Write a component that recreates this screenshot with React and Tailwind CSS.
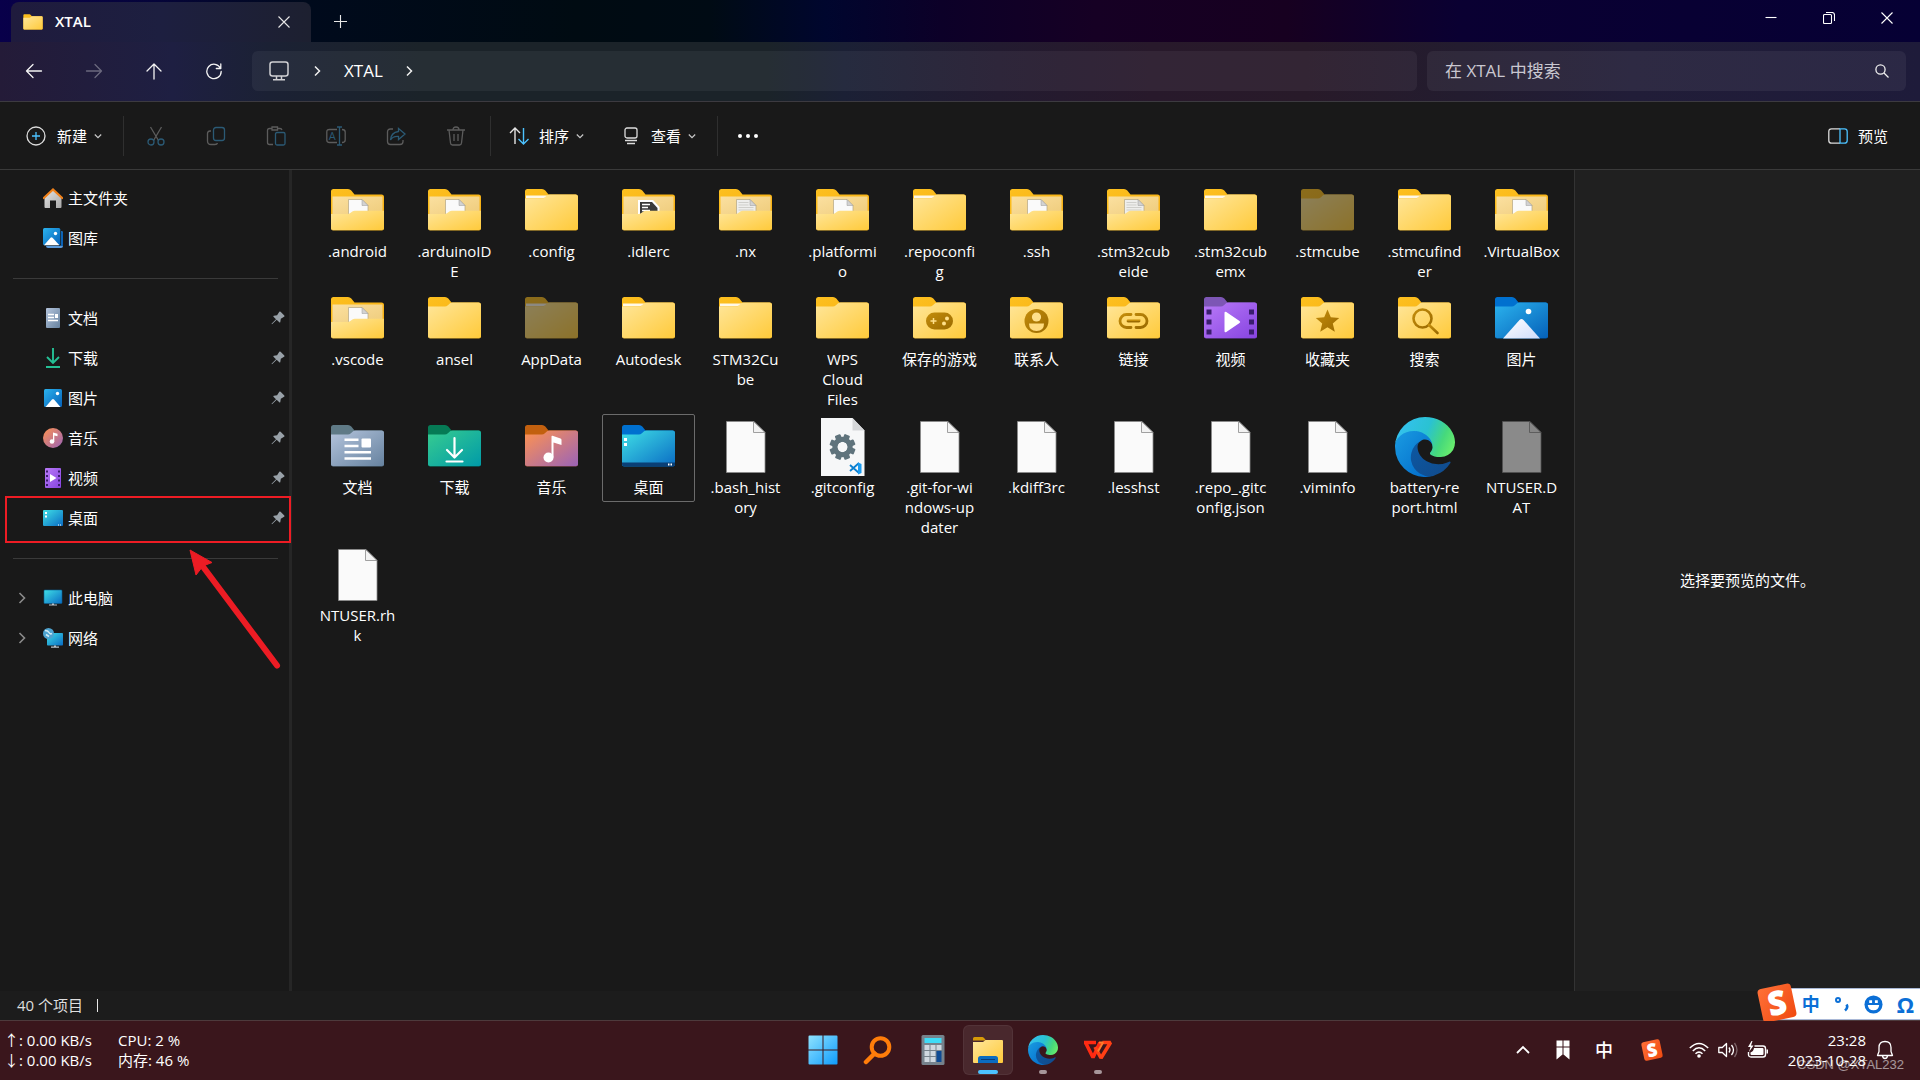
import React, { useState } from 'react';
import { clsx } from 'clsx';

const GRADIENTS = [
  ['gYellow', '#ffe69a', '#ffca3a'],
  ['gTan', '#fbe0a0', '#eecb7a'],
  ['gTab', '#fdc01f', '#f5ac12'],
  ['gGold', '#c48d0b', '#9a6a00'],
  ['gDocs', '#b4c4dc', '#66829f'],
  ['gDown', '#37cc90', '#009aa8'],
  ['gMusic', '#ff9350', '#9a63b8'],
  ['gDesk', '#3fdfe6', '#0a6cc4'],
  ['gVideo', '#b97af8', '#8643e0'],
  ['gPics', '#2bb3ee', '#0560b8'],
  ['gWin', '#8fe3ff', '#0f9bfb'],
  ['gHill', '#ffffff', '#cfdcfb'],
  ['gHome', '#e4e4e4', '#a8a8a8'],
  ['gEdgeDark', '#0c59a4', '#114a8b'],
  ['gEdgeBlue', '#1b9de2', '#0067c9'],
  ['gSogou', '#ff7038', '#f04a10'],
];

const Gradients = () => (
  <svg className="absolute h-0 w-0" aria-hidden="true">
    <defs>
      {GRADIENTS.map(([id, from, to]) => (
        <linearGradient key={id} id={id} x1="0" y1="0" x2="1" y2="1">
          <stop offset="0" stopColor={from} />
          <stop offset="1" stopColor={to} />
        </linearGradient>
      ))}
      <linearGradient id="gEdgeGreen" x1="0" y1="0.3" x2="1" y2="0.6">
        <stop offset="0" stopColor="#35c1f1" />
        <stop offset="0.5" stopColor="#2ac2d2" />
        <stop offset="0.8" stopColor="#46d97c" />
        <stop offset="1" stopColor="#66eb6e" />
      </linearGradient>
    </defs>
  </svg>
);

/* ---------- file icons (60 x 60) ---------- */

const FOLDER_BACK = 'M3.5 9.5Q3.5 7 6 7H20.5Q22.5 7 23.8 8.5L27 12.5H54Q56.5 12.5 56.5 15V46Q56.5 48.5 54 48.5H6Q3.5 48.5 3.5 46Z';
const FOLDER_FRONT = 'M3.5 16.5H20.5Q22 16.5 23.4 15.2L25.6 13.2Q26.6 12.5 28 12.5H54Q56.5 12.5 56.5 15V46Q56.5 48.5 54 48.5H6Q3.5 48.5 3.5 46Z';

const FOLDER_STYLES = {
  docs: ['#5f7a86', 'url(#gDocs)'],
  down: ['#067a55', 'url(#gDown)'],
  music: ['#c2600f', 'url(#gMusic)'],
  desk: ['#0070cf', 'url(#gDesk)'],
  video: ['#7d56b5', 'url(#gVideo)'],
  pics: ['#0070cf', 'url(#gPics)'],
};

const FOLDER_MARKS = {
  docs: (
    <g fill="#fff">
      <path d="M17 20.5h14v2.5H17zM17 26.8h14v2.5H17zM17 33h26.500v2.500H17zM17 39.200h26.500v2.500H17z" />
      <rect x="34" y="20.500" width="9.500" height="9" rx="1" />
    </g>
  ),
  down: (
    <g fill="none" stroke="#fff" strokeWidth="2.2" strokeLinecap="round" strokeLinejoin="round">
      <path d="M30 20v19M22.500 32l7.500 7.500 7.500-7.500M22 43.500h16" />
    </g>
  ),
  music: (
    <g fill="#fff">
      <ellipse cx="27" cy="39.500" rx="5" ry="5" />
      <path d="M30 18.500q0-1 1-.7l8 2.700q1 .4 1 1.400v5l-8-2.500v15h-2z" />
    </g>
  ),
  desk: (
    <g>
      <path d="M3.500 44.500h53v1.500q0 2.500-2.500 2.500H6q-2.500 0-2.500-2.500z" fill="#0a3f75" />
      <path d="M5.500 20h3v3h-3zM5.500 25h3v3h-3z" fill="#fff" />
      <path d="M49.500 45.500h1.500v2h-1.500zM52 45.500h1.500v2H52z" fill="#fff" />
    </g>
  ),
  video: (
    <g>
      <path
        fill="#3a1d6e"
        d="M6 19.500h5v5H6zM6 29.500h5v5H6zM6 39.500h5v5H6zM48.500 19.500h5v5h-5zM48.500 29.500h5v5h-5zM48.500 39.500h5v5h-5z"
      />
      <path d="M24 23q0-2 1.800-1L39 31q1.500 1 0 2L25.800 42q-1.800 1-1.800-1z" fill="#fff" />
    </g>
  ),
  pics: (
    <g>
      <path d="M11.500 48.500L28 30q2-2 4 0l16.500 18.500z" fill="url(#gHill)" />
      <circle cx="37" cy="21.500" r="2.800" fill="#fff" />
    </g>
  ),
  game: (
    <g>
      <rect x="16.500" y="22.500" width="27" height="17" rx="8.500" fill="url(#gGold)" />
      <path d="M24 28v6M21 31h6" stroke="#ffe08a" strokeWidth="1.500" />
      <circle cx="37.500" cy="28.500" r="2" fill="#ffe08a" />
      <circle cx="34.500" cy="33.500" r="2" fill="#ffe08a" />
    </g>
  ),
  contact: (
    <g>
      <circle cx="30" cy="31" r="12" fill="url(#gGold)" />
      <circle cx="30" cy="27" r="4.600" fill="#ffe08a" />
      <path d="M22.500 33.500h15q0 7.500-7.500 7.500t-7.500-7.500z" fill="#ffdc80" />
    </g>
  ),
  link: (
    <g fill="none" stroke="url(#gGold)" strokeWidth="2.800" strokeLinecap="round">
      <path d="M27.500 24.500h-4.500a6.500 6.500 0 0 0 0 13h4.500M32.500 24.500h4.500a6.500 6.500 0 0 1 0 13h-4.500" />
      <path d="M24.500 31h11v.02" />
    </g>
  ),
  star: (
    <path
      fill="url(#gGold)"
      d="M30 19.500l3.300 7.800 8.400.7-6.400 5.500 2 8.200-7.300-4.400-7.300 4.400 2-8.200-6.400-5.500 8.400-.7z"
    />
  ),
  search: (
    <g fill="none" stroke="url(#gGold)" strokeWidth="2.600" strokeLinecap="round">
      <circle cx="28" cy="28.500" r="9" />
      <path d="M34.500 35l8.500 8" />
    </g>
  ),
};

const FolderIcon = ({ type = 'folder', dim }) => {
  const [back, front] = FOLDER_STYLES[type] || ['url(#gTab)', 'url(#gYellow)'];
  const open = type === 'open' || type === 'openText' || type === 'openCode';

  return (
    <svg viewBox="0.5 -1 60 60" className={clsx('h-[60px] w-[60px]', dim && 'opacity-50')} aria-hidden="true">
      <path d={FOLDER_BACK} fill={back} />
      {open ? (
        <g>
          <path d="M5 14.500h50v20H5z" fill="url(#gTan)" />
          {type === 'openCode' ? (
            <g>
              <path d="M19.500 18h15l6.500 7v9h-21.500z" fill="#fff" />
              <path d="M21.500 20h12l5.500 6v8h-17.500z" fill="#3a3a3a" />
              <path d="M23.500 22.500h8M23.500 25.500h6M23.500 28.500h8" stroke="#fff" strokeWidth="1.600" />
            </g>
          ) : (
            <g>
              <path d="M21 17.500h13.500l6 6v12h-19.500z" fill={type === 'openText' ? '#eeeeec' : '#fafafa'} stroke="#b3a581" strokeWidth=".7" />
              <path d="M34.500 17.500v6h6z" fill="#d2d2d2" stroke="#9a9a9a" strokeWidth=".5" />
              {type === 'openText' && <path d="M23 20.500h10M23 23h10M23 25.500h15M23 28h15" stroke="#cfcfcb" strokeWidth="1" />}
            </g>
          )}
          <path
            d="M3.500 32H20q1.500 0 2.800-1l2-1.400q1-.8 2.500-.8H56.500V46q0 2.500-2.500 2.500H6q-2.500 0-2.500-2.500z"
            fill="url(#gYellow)"
          />
        </g>
      ) : (
        <g>
          <path d={FOLDER_FRONT} fill={front} />
          {type === 'paper' && <path d="M4.500 13.500h21l-2.200 2q-1 .8-2.800.8h-16z" fill="#fff" opacity=".9" />}
        </g>
      )}
      <path d="M4 47.500q.5 1 2 1h48q1.500 0 2-1" fill="none" stroke="#00000055" strokeWidth="1" />
      {FOLDER_MARKS[type]}
    </svg>
  );
};

const PageIcon = ({ dim }) => (
  <svg viewBox="0.5 -1 60 60" className={clsx('h-[60px] w-[60px]', dim && 'opacity-50')} aria-hidden="true">
    <path d="M11 3.500h27.500L49.500 14.500V54.500h-38.500z" fill="#fafafa" stroke="#8a8a8a" strokeWidth=".8" />
    <path d="M38 3.500v11h11.500z" fill="#f2f2f2" stroke="#8a8a8a" strokeWidth=".8" />
  </svg>
);

const GitConfigIcon = () => (
  <svg viewBox="0.5 -1 60 60" className="h-[60px] w-[60px]" aria-hidden="true">
    <path d="M8.500 0H40l12 12.500V58h-43.500z" fill="#f6f7f8" />
    <path d="M40 0v12.500h12z" fill="#d5d7d9" />
    <g fill="#5f737c">
      {[0, 45, 90, 135, 180, 225, 270, 315].map((deg) => (
        <rect key={deg} x="27" y="16" width="6" height="8" rx="1" transform={`rotate(${deg + 22} 30 29)`} />
      ))}
    </g>
    <circle cx="30" cy="29" r="7.700" fill="none" stroke="#5f737c" strokeWidth="5" />
    <path d="M37.500 47l9 8M37.500 53l9-8" stroke="#0a7fd0" strokeWidth="1.800" />
    <path d="M45.500 44.500l3.500 1.500v9l-3.500 1.500z" fill="#1a9bf0" />
  </svg>
);

const EdgeIcon = ({ className }) => (
  <svg viewBox="0 0 256 256" className={className} aria-hidden="true">
    <g transform="translate(-4.63 -4.92)">
      <path
        fill="url(#gEdgeDark)"
        d="M235.680 195.460a93.730 93.730 0 0 1-10.540 4.710 101.870 101.870 0 0 1-35.900 6.460c-47.320 0-88.540-32.550-88.540-74.320A31.480 31.480 0 0 1 117.130 105c-42.800 1.800-53.800 46.400-53.800 72.530 0 73.880 68.090 81.370 82.760 81.370 7.910 0 19.840-2.300 27-4.560l1.310-.44a128.340 128.340 0 0 0 66.600-52.800 4 4 0 0 0-5.320-5.640z"
      />
      <path
        fill="url(#gEdgeBlue)"
        d="M110.340 246.340A79.200 79.200 0 0 1 87.600 225a80.720 80.720 0 0 1 29.530-120c3.120-1.470 8.450-4.130 15.540-4a32.350 32.350 0 0 1 25.690 13 31.880 31.880 0 0 1 6.360 18.660c0-.21 24.460-79.600-80-79.600-43.900 0-80 41.660-80 78.210a130.150 130.150 0 0 0 12.110 56 128 128 0 0 0 156.380 67.110 75.550 75.550 0 0 1-62.780-8z"
      />
      <path
        fill="url(#gEdgeGreen)"
        d="M156.940 153.780c-.81 1.050-3.300 2.500-3.300 5.660 0 2.610 1.700 5.120 4.720 7.230 14.380 10 41.490 8.680 41.560 8.680a59.560 59.560 0 0 0 30.270-8.350 61.380 61.380 0 0 0 30.440-52.950c.26-22.410-8-37.310-11.340-43.910-21.190-41.400-66.930-65.220-116.670-65.220a128 128 0 0 0-128 126.200c.48-36.540 36.800-66.050 80-66.050 3.500 0 23.460.34 42 10.070 16.340 8.580 24.900 18.940 30.850 29.210 6.180 10.670 7.280 24.150 7.280 29.520s-2.740 13.330-7.810 19.910z"
      />
    </g>
  </svg>
);

const FileIcon = ({ type, dim }) => {
  if (type === 'page') return <PageIcon dim={dim} />;
  if (type === 'git') return <GitConfigIcon />;
  if (type === 'edge') return <EdgeIcon className="h-[60px] w-[60px]" />;
  return <FolderIcon type={type} dim={dim} />;
};

// Line breaks in a name follow the icon view's wrapping
const FILES = [
  { name: '.android', type: 'open' },
  { name: '.arduinoID\nE', type: 'open' },
  { name: '.config', type: 'paper' },
  { name: '.idlerc', type: 'openCode' },
  { name: '.nx', type: 'openText' },
  { name: '.platformi\no', type: 'open' },
  { name: '.repoconfi\ng', type: 'paper' },
  { name: '.ssh', type: 'open' },
  { name: '.stm32cub\neide', type: 'openText' },
  { name: '.stm32cub\nemx', type: 'paper' },
  { name: '.stmcube', type: 'folder', dim: true },
  { name: '.stmcufind\ner', type: 'paper' },
  { name: '.VirtualBox', type: 'open' },
  { name: '.vscode', type: 'open' },
  { name: 'ansel', type: 'folder' },
  { name: 'AppData', type: 'paper', dim: true },
  { name: 'Autodesk', type: 'paper' },
  { name: 'STM32Cu\nbe', type: 'paper' },
  { name: 'WPS\nCloud\nFiles', type: 'folder' },
  { name: '保存的游戏', type: 'game' },
  { name: '联系人', type: 'contact' },
  { name: '链接', type: 'link' },
  { name: '视频', type: 'video' },
  { name: '收藏夹', type: 'star' },
  { name: '搜索', type: 'search' },
  { name: '图片', type: 'pics' },
  { name: '文档', type: 'docs' },
  { name: '下载', type: 'down' },
  { name: '音乐', type: 'music' },
  { name: '桌面', type: 'desk' },
  { name: '.bash_hist\nory', type: 'page' },
  { name: '.gitconfig', type: 'git' },
  { name: '.git-for-wi\nndows-up\ndater', type: 'page' },
  { name: '.kdiff3rc', type: 'page' },
  { name: '.lesshst', type: 'page' },
  { name: '.repo_.gitc\nonfig.json', type: 'page' },
  { name: '.viminfo', type: 'page' },
  { name: 'battery-re\nport.html', type: 'edge' },
  { name: 'NTUSER.D\nAT', type: 'page', dim: true },
  { name: 'NTUSER.rh\nk', type: 'page' },
];

/* ---------- sidebar icons (20 x 20) ---------- */

const SIDE_ICONS = {
  home: (
    <g>
      <path d="M1.500 9.500L10 2l8.500 7.500V19q0 1-1 1H13v-7.500H7V20H2.500q-1 0-1-1z" fill="url(#gHome)" />
      <path d="M.8 10L10 1.500 19.200 10" fill="none" stroke="#f0811a" strokeWidth="2.200" strokeLinecap="round" />
    </g>
  ),
  gallery: (
    <g>
      <rect x="3" y="3" width="17" height="17" rx="2" fill="#5b9bdc" />
      <path d="M18 3q2 0 2 2v13h-2z" fill="#0b62b5" />
      <rect width="18" height="18" rx="1.500" fill="#191919" />
      <rect width="17.300" height="17.300" rx="1.500" fill="url(#gPics)" />
      <path d="M1 17.300l6.500-7.500q1-1 2 0l7 7.500z" fill="#fff" />
      <circle cx="12.500" cy="5.500" r="1.700" fill="#fff" />
    </g>
  ),
  docs: (
    <g>
      <rect x="3" width="14" height="20" rx="1" fill="url(#gDocs)" />
      <path d="M5 6.500h6M5 9.500h6M5 12.500h10" stroke="#fff" strokeWidth="1.300" />
      <path d="M12 6h3v4h-3z" fill="#fff" />
    </g>
  ),
  down: (
    <g fill="none" stroke="#25c095" strokeWidth="1.900">
      <path d="M10 0v14.500M4 9l6 6 6-6M3 19h14" />
    </g>
  ),
  pics: (
    <g>
      <rect x="1" y="1" width="18" height="18" rx="1.500" fill="url(#gPics)" />
      <path d="M2.500 19L9 11.500q1-1 2 0L17.500 19z" fill="#fff" />
      <circle cx="14.500" cy="5.500" r="1.700" fill="#fff" />
    </g>
  ),
  music: (
    <g>
      <circle cx="10" cy="10" r="10" fill="url(#gMusic)" />
      <circle cx="9" cy="13.500" r="2.300" fill="#fff" />
      <path d="M10 4.500l4.500 1.200v2.600l-3.200-.8v6H10z" fill="#fff" />
    </g>
  ),
  video: (
    <g>
      <rect x="2" width="16" height="20" rx="1" fill="url(#gVideo)" />
      <path
        d="M3 2.500h2v2H3zM3 7h2v2H3zM3 11.500h2v2H3zM3 16h2v2H3zM15 2.500h2v2h-2zM15 7h2v2h-2zM15 11.500h2v2h-2zM15 16h2v2h-2z"
        fill="#3a1d6e"
      />
      <path d="M7 6l6.500 4L7 14z" fill="#fff" />
    </g>
  ),
  desk: (
    <g>
      <rect y="2" width="20" height="16" rx="1" fill="url(#gDesk)" />
      <path d="M2 4h2v2H2zM2 7.500h2v2H2z" fill="#fff" />
      <path d="M15 16.500h1v1h-1zM17 16.500h1v1h-1z" fill="#fff" />
    </g>
  ),
  pc: (
    <g>
      <rect x="1" y="2" width="18" height="13.500" rx=".8" fill="url(#gDesk)" stroke="#0a5f96" strokeWidth=".6" />
      <path d="M9 15.500h2v1.500H9zM6 16.500h8v1H6z" fill="#b9c3cb" />
    </g>
  ),
  net: (
    <g>
      <rect x="4" y="5" width="16" height="12.500" rx=".8" fill="url(#gDesk)" />
      <path d="M11 17.500h2v1.500h-2zM8 18.500h8v1.200H8z" fill="#b9c3cb" />
      <circle cx="5.500" cy="5.500" r="5.500" fill="#4ea3cf" />
      <path d="M2 2.500q3 0 4 2t3 1M3 6.500l3 2" stroke="#cfeaf5" strokeWidth="1.600" fill="none" />
    </g>
  ),
};

const SIDE_GROUPS = [
  [
    { name: '主文件夹', icon: 'home' },
    { name: '图库', icon: 'gallery' },
  ],
  [
    { name: '文档', icon: 'docs', pinned: true },
    { name: '下载', icon: 'down', pinned: true },
    { name: '图片', icon: 'pics', pinned: true },
    { name: '音乐', icon: 'music', pinned: true },
    { name: '视频', icon: 'video', pinned: true },
    { name: '桌面', icon: 'desk', pinned: true, marked: true },
  ],
  [
    { name: '此电脑', icon: 'pc', expandable: true },
    { name: '网络', icon: 'net', expandable: true },
  ],
];

const PinIcon = () => (
  <svg viewBox="0 0 14 14" className="h-[14px] w-[14px]" fill="#98a1a8" aria-hidden="true">
    <path d="M8.300.8q.7-.6 1.300 0l3.700 3.700q.6.7-.2 1.200L9.800 7.800 9.300 11q-.3.900-1 .3L5.700 8.800 1 13.300.5 12.800 5 8.200 2.500 5.700q-.6-.8.4-1l3.200-.5z" />
  </svg>
);

const Sidebar = () => (
  <aside className="relative w-[289px] shrink-0 bg-[#191919] pt-2">
    <nav>
      {SIDE_GROUPS.map((group, i) => (
        <div key={i}>
          {i > 0 && (
            <div className="flex h-10 items-center pl-[13px] pr-[11px]">
              <hr className="w-full border-[#3a3a3a]" />
            </div>
          )}
          {group.map((item) => (
            <a key={item.name} href="#" className="relative flex h-10 items-center pl-4 pr-1">
              <span className="flex w-[27px] items-center">
                {item.expandable && (
                  <svg viewBox="0 0 12 12" className="h-3 w-3" fill="none" stroke="#8a8a8a" strokeWidth="1.600" aria-hidden="true">
                    <path d="M3.500 1l5 5-5 5" />
                  </svg>
                )}
              </span>
              <svg viewBox="0 0 20 20" className="h-5 w-5" aria-hidden="true">
                {SIDE_ICONS[item.icon]}
              </svg>
              <span className="ml-[5px] flex-1">{item.name}</span>
              {item.pinned && <PinIcon />}
              {item.marked && (
                <span className="absolute -top-[2px] left-[5px] z-10 h-[47px] w-[286px] border-2 border-[#ed1c24]" />
              )}
            </a>
          ))}
        </div>
      ))}
    </nav>
    <svg viewBox="0 0 100 130" className="pointer-events-none absolute left-[185px] top-[375px] z-10 h-[130px] w-[100px]" aria-hidden="true">
      <path d="M16 19L92 120.500" stroke="#ed1c24" strokeWidth="6" strokeLinecap="round" />
      <path d="M5 5L27 17.500 18 21 11 30z" fill="#ed1c24" stroke="#ed1c24" strokeWidth="1" />
    </svg>
  </aside>
);

/* ---------- title bar ---------- */

const TitleBar = () => (
  <header className="flex h-[42px] items-end bg-[linear-gradient(90deg,#08004a_0%,#05043a_8%,#000a1c_16%,#000b12_30%,#000b14_37%,#00062e_43%,#0c0028_49%,#160024_57%,#170020_67%,#0a0032_76%,#060034_100%)] pl-[11px]">
    <div className="flex h-10 w-[300px] items-center rounded-t-lg bg-[linear-gradient(90deg,#1f1b3d_0%,#1d1f40_50%,#1d2030_100%)] pb-px pl-3 pr-[14px]">
      <svg viewBox="3 6 54 44" className="h-[16px] w-[20px]" aria-hidden="true">
        <path d={FOLDER_BACK} fill="url(#gTab)" />
        <path d={FOLDER_FRONT} fill="url(#gYellow)" />
      </svg>
      <span className="ml-3 flex-1 font-semibold">XTAL</span>
      <button type="button" aria-label="关闭标签页" className="flex h-[26px] w-[26px] items-center justify-center">
        <svg viewBox="0 0 12 12" className="h-3 w-3" stroke="#e8e8e8" strokeWidth="1.100" aria-hidden="true">
          <path d="M.5.5l11 11M11.500.5l-11 11" />
        </svg>
      </button>
    </div>
    <button type="button" aria-label="新建标签页" className="flex h-10 w-[58px] items-center justify-center pb-px">
      <svg viewBox="0 0 14 14" className="h-[13px] w-[13px]" stroke="#e8e8e8" strokeWidth="1.200" aria-hidden="true">
        <path d="M7 0v14M0 7h14" />
      </svg>
    </button>
    <div className="ml-auto flex self-start pr-1">
      {[
        ['最小化', 'M.5 5.500h11'],
        ['还原', 'M.5 3.500q0-1 1-1h6q1 0 1 1v7q0 1-1 1h-6q-1 0-1-1zM3 .5h6q2.500 0 2.500 2.500v6'],
        ['关闭', 'M.5.5l11 11M11.500.5l-11 11'],
      ].map(([label, d]) => (
        <button key={label} type="button" aria-label={label} className="flex h-9 w-[58px] items-center justify-center">
          <svg viewBox="0 0 12 12" className="h-3 w-3" fill="none" stroke="#fff" strokeWidth="1.100" aria-hidden="true">
            <path d={d} />
          </svg>
        </button>
      ))}
    </div>
  </header>
);

const Chevron = () => (
  <svg viewBox="0 0 12 12" className="h-3 w-3" fill="none" stroke="#f0f0f0" strokeWidth="1.500" aria-hidden="true">
    <path d="M4 1.500L8.500 6 4 10.500" />
  </svg>
);

const NAV_BUTTONS = [
  { label: '后退', d: 'M16.500 9H1.500M8 2.500L1.500 9 8 15.500' },
  { label: '前进', d: 'M1.500 9h15M10 2.500L16.500 9 10 15.500', disabled: true },
  { label: '上移', d: 'M9 17V2M2 9l7-7 7 7' },
  { label: '刷新', d: 'M15.500 6.300A7.200 7.200 0 1 0 16.200 9.500M15.800 2v4.500h-4.500' },
];

const NavBar = () => {
  const [query, setQuery] = useState('');

  return (
    <div className="flex h-[60px] items-center border-b border-[#3c3a40] bg-[linear-gradient(90deg,#241b38_0%,#1e1f42_9%,#1b2134_14%,#1b2329_22%,#1b2329_40%,#1b2035_44%,#231b30_52%,#28192b_60%,#281a29_68%,#231c2f_76%,#211d38_85%,#1e1b3a_100%)] pb-px pl-1 pr-[14px]">
      {NAV_BUTTONS.map((btn) => (
        <button
          key={btn.label}
          type="button"
          aria-label={btn.label}
          disabled={btn.disabled}
          className={clsx('flex h-10 w-[60px] items-center justify-center', btn.disabled && 'opacity-35')}
        >
          <svg
            viewBox="0 0 18 18"
            className="h-[18px] w-[18px]"
            fill="none"
            stroke="#f4f4f4"
            strokeWidth="1.300"
            strokeLinecap="round"
            strokeLinejoin="round"
            aria-hidden="true"
          >
            <path d={btn.d} />
          </svg>
        </button>
      ))}
      <div className="ml-2 flex h-10 flex-1 items-center rounded-md bg-white/5 pl-[17px] text-[17px]">
        <svg viewBox="0 0 20 20" className="h-5 w-5" fill="none" stroke="#d0d0d4" strokeWidth="1.500" aria-hidden="true">
          <rect x="1" y="1" width="18" height="14" rx="2.500" />
          <path d="M7.500 15v3.500M12.500 15v3.500M4 18.700h12" />
        </svg>
        <span className="ml-[22px]">
          <Chevron />
        </span>
        <a href="#" className="ml-[21px] mr-5">
          XTAL
        </a>
        <Chevron />
      </div>
      <label className="ml-[10px] flex h-10 w-[479px] items-center rounded-md bg-white/6 pl-[18px] pr-[17px]">
        <input
          type="text"
          value={query}
          onChange={(e) => setQuery(e.target.value)}
          placeholder="在 XTAL 中搜索"
          aria-label="在 XTAL 中搜索"
          className="min-w-0 flex-1 bg-transparent text-[17px] outline-none placeholder:text-[#c9c7d0]"
        />
        <svg viewBox="0 0 14 14" className="h-[14px] w-[14px]" fill="none" stroke="#f0f0f0" strokeWidth="1.300" aria-hidden="true">
          <circle cx="5.500" cy="5.500" r="4.600" />
          <path d="M9 9l4.500 4.500" />
        </svg>
      </label>
    </div>
  );
};

/* ---------- command bar ---------- */

const TOOL_ICONS = [
  {
    label: '剪切',
    icon: (
      <g>
        <path d="M4.500 1l8 13.500M15.500 1l-8 13.500" />
        <g stroke="#2b5a75">
          <circle cx="5" cy="16" r="3" />
          <circle cx="15" cy="16" r="3" />
        </g>
      </g>
    ),
  },
  {
    label: '复制',
    icon: (
      <g>
        <path d="M5 5H4Q1.500 5 1.500 7.500V15Q1.500 18.500 5 18.500h4q2 0 2.500-1.500" />
        <rect x="7.500" y="1.500" width="11" height="13" rx="2.500" stroke="#2b5a75" />
      </g>
    ),
  },
  {
    label: '粘贴',
    icon: (
      <g>
        <path d="M6 2.500H3.500q-2 0-2 2v12q0 2 2 2H7M11.500 2.500H14q1.500 0 2 1.500M6 1h5.500v3H6z" />
        <rect x="9.500" y="6.500" width="9.500" height="12.500" rx="1.500" stroke="#2b5a75" />
      </g>
    ),
  },
  {
    label: '重命名',
    icon: (
      <g>
        <path d="M11 3.500H3.500Q.8 3.500.8 6v8q0 2.500 2.700 2.500H11M16 3.500q3.200 0 3.200 2.500v8q0 2.500-3.200 2.500" />
        <path d="M11 1h5M13.500 1v18M11 19h5" stroke="#2b5a75" />
        <text x="2.800" y="14" fontSize="11" fill="#2b5a75" stroke="none">
          A
        </text>
      </g>
    ),
  },
  {
    label: '共享',
    icon: (
      <g>
        <path d="M7 3H4.500Q1.500 3 1.500 6v9.500q0 3 3 3H14q3 0 3-3V14" />
        <path d="M12.500 2.500L19 8l-6.500 5.500v-3Q7 10 4.500 14 5 6.500 12.500 5.500z" stroke="#2b5a75" />
      </g>
    ),
  },
  {
    label: '删除',
    icon: <path d="M1 4h18M7 4q0-3 3-3t3 3M3 4l1.500 13q.2 2 2 2h7q1.800 0 2-2L17 4M8 8v7M12 8v7" />,
  },
];

const Caret = () => (
  <svg viewBox="0 0 8 8" className="h-2 w-2" fill="none" stroke="#c8c8c8" strokeWidth="1.200" aria-hidden="true">
    <path d="M.8 2.500L4 5.700l3.200-3.200" />
  </svg>
);

const Separator = () => <span className="h-10 w-px bg-[#2f2f2f]" />;

const CommandBar = () => (
  <div className="flex h-[68px] items-center border-b border-[#3a3a3a] bg-[#191919] pl-[26px] pr-8 pt-px">
    <button type="button" className="mr-[21px] flex items-center">
      <svg viewBox="0 0 20 20" className="mr-[11px] h-5 w-5" fill="none" stroke="#dcdcdc" strokeWidth="1.300" aria-hidden="true">
        <circle cx="10" cy="10" r="9" />
        <path d="M10 6v8M6 10h8" stroke="#4cc2ff" />
      </svg>
      新建
      <span className="ml-[7px]">
        <Caret />
      </span>
    </button>
    <Separator />
    <div className="ml-[2px] mr-1 flex">
      {TOOL_ICONS.map((tool) => (
        <button key={tool.label} type="button" aria-label={tool.label} disabled className="flex h-10 w-[60px] items-center justify-center">
          <svg viewBox="0 0 20 20" className="h-5 w-5" fill="none" stroke="#5c5c5c" strokeWidth="1.300" aria-hidden="true">
            {tool.icon}
          </svg>
        </button>
      ))}
    </div>
    <Separator />
    <button type="button" className="ml-[18px] flex items-center">
      <svg viewBox="0 0 20 20" className="mr-[10px] h-5 w-5" fill="none" stroke="#e4e4e4" strokeWidth="1.400" aria-hidden="true">
        <path d="M6 18V2M1 7l5-5 5 5" />
        <path d="M14.500 2v16M9.500 13l5 5 5-5" stroke="#4cc2ff" />
      </svg>
      排序
      <span className="ml-[7px]">
        <Caret />
      </span>
    </button>
    <button type="button" className="ml-[39px] mr-[21px] flex items-center">
      <svg viewBox="0 0 16 18" className="mr-3 h-[18px] w-4" fill="none" stroke="#dcdcdc" strokeWidth="1.300" aria-hidden="true">
        <rect x="2" y="1" width="12" height="10" rx="2" />
        <path d="M2 13.500h12M4 16.500h8" />
      </svg>
      查看
      <span className="ml-[7px]">
        <Caret />
      </span>
    </button>
    <Separator />
    <button type="button" aria-label="查看更多" className="ml-5 flex h-10 items-center gap-1">
      <span className="h-1 w-1 rounded-full bg-white" />
      <span className="h-1 w-1 rounded-full bg-white" />
      <span className="h-1 w-1 rounded-full bg-white" />
    </button>
    <button type="button" className="ml-auto flex items-center">
      <svg viewBox="0 0 20 16" className="mr-[10px] h-4 w-5" fill="none" stroke="#dcdcdc" strokeWidth="1.300" aria-hidden="true">
        <path d="M12 .8H3.500Q.8.800.8 3.500v9q0 2.700 2.700 2.700H12" />
        <path d="M12 .8h4.500q2.700 0 2.700 2.700v9q0 2.700-2.700 2.700H12z" stroke="#4cc2ff" />
      </svg>
      预览
    </button>
  </div>
);

/* ---------- content ---------- */

const FileGrid = () => {
  const [selected, setSelected] = useState('桌面');

  return (
    <main className="flex-1 border-l-[3px] border-r border-l-[#262626] border-r-[#333333] bg-[#191919] pl-[19px] pt-2">
      <ul className="grid grid-cols-[repeat(auto-fill,93px)] items-start gap-x-1">
        {FILES.map((file) => (
          <li key={file.name}>
            <button
              type="button"
              onClick={() => setSelected(file.name)}
              className={clsx(
                'flex w-full flex-col items-center rounded-xs border pb-1 pt-[2px]',
                selected === file.name ? 'border-[#6b6b6b]' : 'border-transparent'
              )}
            >
              <FileIcon type={file.type} dim={file.dim} />
              <span className="whitespace-pre text-center leading-5">{file.name}</span>
            </button>
          </li>
        ))}
      </ul>
    </main>
  );
};

/* ---------- status bar + input method bar ---------- */

const SogouLogo = ({ className }) => (
  <svg viewBox="0 0 40 40" className={clsx('overflow-visible', className)} aria-hidden="true">
    <g transform="rotate(-12 20 20)">
      <rect x="3" y="3" width="34" height="34" rx="4" fill="url(#gSogou)" />
      <text x="20" y="31" textAnchor="middle" fontSize="31" fontWeight="700" fill="#fff" stroke="#fff" strokeWidth="2">
        S
      </text>
    </g>
  </svg>
);

const StatusBar = () => (
  <footer className="relative flex h-[30px] items-center border-b border-[#4d3a3c] bg-[#1c1c1c] pl-[17px] text-[#dedede]">
    <span>40 个项目</span>
    <span className="ml-[14px] h-[13px] w-px bg-[#e8e8e8]" />
    <div className="absolute bottom-0 right-0 flex h-8 w-[154px] items-center justify-end gap-[14px] border border-r-0 border-[#a9b8d6] bg-white pr-[6px] text-[#0b6fd6]">
      <SogouLogo className="absolute -left-[10px] -top-[6px] h-10 w-10" />
      <span className="text-lg font-bold leading-none">中</span>
      <svg viewBox="0 0 16 16" className="h-4 w-4" fill="none" stroke="#0b6fd6" strokeWidth="2" aria-hidden="true">
        <circle cx="4" cy="4" r="2" />
        <path d="M12.500 8.500q2 3-1.500 6" strokeWidth="2.600" />
      </svg>
      <svg viewBox="0 0 20 20" className="h-[19px] w-[19px]" aria-hidden="true">
        <circle cx="10" cy="10" r="9.500" fill="#0b6fd6" />
        <path d="M5.500 5.500h3v3h-3zM11.500 5.500h3v3h-3z" fill="#fff" />
        <path d="M4 10.500h12q-.5 5.500-6 5.500t-6-5.500z" fill="#fff" />
      </svg>
      <span className="text-[22px] font-bold leading-none">Ω</span>
    </div>
  </footer>
);

/* ---------- taskbar ---------- */

const TASK_APPS = [
  {
    label: '开始',
    icon: (
      <g fill="url(#gWin)">
        <path d="M.5 1.500q0-1 1-1h13v14H.5zM15.500.5h13q1 0 1 1v13h-14zM.5 15.500h14v14h-13q-1 0-1-1zM15.500 15.500h14v13q0 1-1 1h-13z" />
      </g>
    ),
  },
  {
    label: '搜索',
    icon: (
      <g fill="none" stroke="#ff7d0a">
        <circle cx="17.500" cy="12" r="8.800" strokeWidth="4" />
        <path d="M11.500 18.500L3 27" strokeWidth="4.500" strokeLinecap="round" />
      </g>
    ),
  },
  {
    label: '计算器',
    icon: (
      <g>
        <rect x="3.500" width="23" height="30" rx="1.500" fill="#76828c" />
        <rect x="6.500" y="3" width="17" height="5" fill="#3fdcf7" />
        <path
          d="M6.500 10h5v5h-5zM12.500 10h5v5h-5zM18.500 10h5v5h-5zM6.500 16h5v5h-5zM12.500 16h5v5h-5zM6.500 22h5v5h-5zM12.500 22h5v5h-5z"
          fill="#cfd8e0"
        />
        <path d="M18.500 16h5v11h-5z" fill="#0d4a94" />
      </g>
    ),
  },
  {
    label: '文件资源管理器',
    active: true,
    icon: (
      <g>
        <path d="M0 3.500q0-1.500 1.500-1.500h8q1 0 2 1.500l1.500 2H0z" fill="#d79a08" />
        <path d="M0 7h10l2.500-2H29q1 0 1 1v21q0 1-1 1H1q-1 0-1-1z" fill="url(#gYellow)" />
        <path d="M5 28v-4.500q0-2.500 2.500-2.500h15q2.500 0 2.500 2.500V28z" fill="#0b6cc0" />
        <path d="M8 24.500h14" stroke="#0a3d78" strokeWidth="1" />
      </g>
    ),
  },
  { label: 'Edge', running: true },
  {
    label: 'WPS',
    running: true,
    icon: (
      <g fill="none" strokeWidth="3.600" strokeLinejoin="bevel">
        <path d="M1 7.500h12M2.500 7.500L10 22.500l7-15" stroke="#ff2a12" />
        <path d="M12 12l6 11 9.500-15.500h-8" stroke="#ff3f15" />
        <path d="M16 7.500h4l-5 9" stroke="#ff7a2a" strokeWidth="2" />
      </g>
    ),
  },
];

const TrayButton = ({ label, className, children }) => (
  <button type="button" aria-label={label} className={clsx('flex items-center justify-center', className)}>
    {children}
  </button>
);

const Taskbar = () => (
  <div className="relative grid h-[59px] grid-cols-[1fr_auto_1fr] items-center bg-[#3a161c] pb-[2px]">
    <div className="flex gap-[30px] pl-1 leading-5">
      <div className="w-[84px] whitespace-nowrap">
        <p>↑: 0.00 KB/s</p>
        <p>↓: 0.00 KB/s</p>
      </div>
      <div className="whitespace-nowrap">
        <p>CPU: 2 %</p>
        <p>内存: 46 %</p>
      </div>
    </div>

    <div className="flex gap-[5px]">
      {TASK_APPS.map((app) => (
        <button
          key={app.label}
          type="button"
          aria-label={app.label}
          className={clsx(
            'relative flex h-[50px] w-[50px] items-center justify-center rounded-md',
            app.active && 'border border-white/5 bg-white/8'
          )}
        >
          {app.icon ? (
            <svg viewBox="0 0 30 30" className="h-[30px] w-[30px]" aria-hidden="true">
              {app.icon}
            </svg>
          ) : (
            <EdgeIcon className="h-[30px] w-[30px]" />
          )}
          {app.active && <span className="absolute bottom-0 h-1 w-5 rounded-full bg-[#4cc2ff]" />}
          {app.running && <span className="absolute bottom-px h-1 w-2 rounded-full bg-[#a6969a]" />}
        </button>
      ))}
    </div>

    <div className="flex items-center justify-end pr-[23px]">
      <TrayButton label="显示隐藏的图标" className="h-10 w-10">
        <svg viewBox="0 0 14 14" className="h-[14px] w-[14px]" fill="none" stroke="#fff" strokeWidth="1.800" aria-hidden="true">
          <path d="M1 10l6-6 6 6" />
        </svg>
      </TrayButton>
      <TrayButton label="书签" className="h-10 w-10">
        <svg viewBox="0 0 14 20" className="h-5 w-[14px]" fill="#fff" aria-hidden="true">
          <path d="M.5.5h6v6h-6zM7.500.5h6v6h-6zM.5 7.500h6v7l-6 5zM7.500 7.500h6v12l-6-5z" />
        </svg>
      </TrayButton>
      <TrayButton label="输入语言" className="h-10 w-[42px]">
        <span className="text-lg font-medium leading-none">中</span>
      </TrayButton>
      <TrayButton label="搜狗输入法" className="h-10 w-[54px]">
        <SogouLogo className="h-[22px] w-[22px]" />
      </TrayButton>
      <TrayButton label="网络、音量和电源" className="h-10 gap-[9px] pl-[10px]">
        <svg viewBox="0 0 20 16" className="h-4 w-5" fill="none" stroke="#fff" strokeWidth="1.500" aria-hidden="true">
          <path d="M.8 6Q10-3 19.200 6M3.800 9Q10 2.500 16.200 9M6.500 11.800q3.500-3.400 7 0" />
          <circle cx="10" cy="14" r="1.800" fill="#fff" stroke="none" />
        </svg>
        <svg viewBox="0 0 20 16" className="h-4 w-5" fill="none" stroke="#fff" strokeWidth="1.300" strokeLinejoin="round" aria-hidden="true">
          <path d="M.8 5.500v5h3.500L8.500 14.500V1.500L4.300 5.500zM11 5.500q2 2.500 0 5M13.500 3q4 5 0 10" />
          <path d="M16.500 1q5 7 0 14" stroke="#ffffff55" />
        </svg>
        <svg viewBox="0 0 22 18" className="h-[18px] w-[22px]" fill="none" stroke="#fff" strokeWidth="1.400" aria-hidden="true">
          <path d="M7.500 5H16q2.500 0 2.500 2.500v6q0 2.500-2.500 2.500H4q-2.500 0-2.500-2.500V11" />
          <path d="M7 7h8.500q1 0 1 1v5q0 1-1 1H4.500q-1 0-1-1v-1.500q3-1 3.500-4.500z" fill="#fff" stroke="none" />
          <path d="M4.500 0L1 6h2.500L2 11l4.500-6.500H4L5.500 0zM19.500 8.500H21v4h-1.500z" fill="#fff" stroke="none" />
        </svg>
      </TrayButton>
      <div className="w-[97px] text-right leading-5">
        <p>23:28</p>
        <p>2023-10-28</p>
      </div>
      <TrayButton label="通知" className="ml-[7px] h-10 w-6">
        <svg viewBox="0 0 18 20" className="h-5 w-[18px]" fill="none" stroke="#fff" strokeWidth="1.300" strokeLinejoin="round" aria-hidden="true">
          <path d="M9 1.500q6 0 6 6v4l1.500 4H1.500l1.500-4v-4q0-6 6-6zM6.500 16q.5 2.500 2.500 2.500t2.500-2.500" />
        </svg>
      </TrayButton>
    </div>

    <span className="absolute bottom-[5px] right-4 whitespace-nowrap font-['Liberation_Sans'] text-[13px] leading-5 text-white/55">
      CSDN @XTAL232
    </span>
  </div>
);

const App = () => (
  <div className="flex min-h-screen flex-col bg-[#191919] font-['Open_Sans','Noto_Sans_CJK_SC',sans-serif] text-[15px] text-white">
    <Gradients />
    <TitleBar />
    <NavBar />
    <CommandBar />
    <div className="flex flex-1">
      <Sidebar />
      <FileGrid />
      <section className="flex w-[345px] items-center justify-center bg-[#202020]">
        <p>选择要预览的文件。</p>
      </section>
    </div>
    <StatusBar />
    <Taskbar />
  </div>
);

export default App;
